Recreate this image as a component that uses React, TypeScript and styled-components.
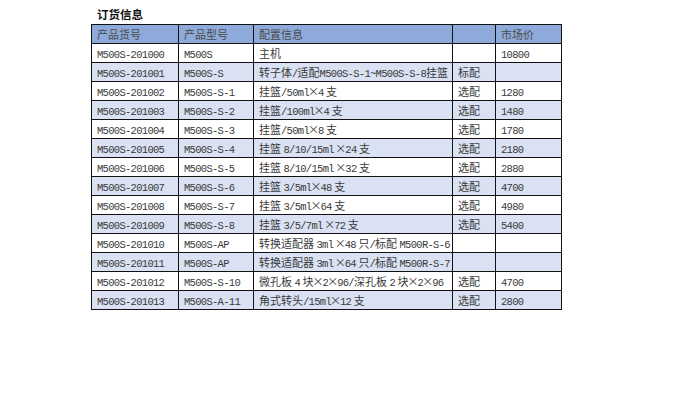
import styled, { createGlobalStyle } from 'styled-components';

const GlobalStyle = createGlobalStyle`
  html, body {
    margin: 0;
    padding: 0;
    background: #ffffff;
  }
  body {
    font-family: "Noto Sans CJK SC", "Liberation Sans", sans-serif;
  }
`;

const St = {
  Page: styled.div`
    padding: 8px 0 0 91px;
  `,
  Title: styled.h3`
    margin: 0 0 3px 6px;
    height: 13px;
    line-height: 13px;
    font-size: 11.5px;
    font-weight: 700;
    color: #111;
  `,
  Table: styled.table`
    border-collapse: collapse;
    table-layout: fixed;
    width: 470px;
    font-size: 11px;
    color: #3a3a3a;
  `,
  Row: styled.tr`
    height: 19px;
  `,
  Cell: styled.td<{ $head?: boolean; $alt?: boolean }>`
    border: 1px solid #111;
    height: 18px;
    padding: 0 5px;
    line-height: 12px;
    vertical-align: middle;
    white-space: nowrap;
    overflow: hidden;
    font-weight: 400;
    text-align: left;
    color: ${(p) => (p.$head ? '#4a4a4a' : '#3a3a3a')};
    background: ${(p) => (p.$head ? '#8eaadb' : p.$alt ? '#d9e1f2' : '#ffffff')};
  `,
  Latin: styled.span`
    font-family: "Liberation Mono", monospace;
    font-size: 10.5px;
    line-height: 10px;
    letter-spacing: -0.7px;
  `,
  Times: styled.span`
    margin: 0 -1px;
  `,
};

const cols = [87, 75, 199, 43, 66];

const head = ['产品货号', '产品型号', '配置信息', '', '市场价'];

const rows: string[][] = [
  ['M500S-201000', 'M500S', '主机', '', '10800'],
  ['M500S-201001', 'M500S-S', '转子体/适配M500S-S-1~M500S-S-8挂篮', '标配', ''],
  ['M500S-201002', 'M500S-S-1', '挂篮/50ml×4 支', '选配', '1280'],
  ['M500S-201003', 'M500S-S-2', '挂篮/100ml×4 支', '选配', '1480'],
  ['M500S-201004', 'M500S-S-3', '挂篮/50ml×8 支', '选配', '1780'],
  ['M500S-201005', 'M500S-S-4', '挂篮 8/10/15ml ×24 支', '选配', '2180'],
  ['M500S-201006', 'M500S-S-5', '挂篮 8/10/15ml ×32 支', '选配', '2880'],
  ['M500S-201007', 'M500S-S-6', '挂篮 3/5ml×48 支', '选配', '4700'],
  ['M500S-201008', 'M500S-S-7', '挂篮 3/5ml×64 支', '选配', '4980'],
  ['M500S-201009', 'M500S-S-8', '挂篮 3/5/7ml ×72 支', '选配', '5400'],
  ['M500S-201010', 'M500S-AP', '转换适配器 3ml ×48 只/标配 M500R-S-6', '', ''],
  ['M500S-201011', 'M500S-AP', '转换适配器 3ml ×64 只/标配 M500R-S-7', '', ''],
  ['M500S-201012', 'M500S-S-10', '微孔板 4 块×2×96/深孔板 2 块×2×96', '选配', '4700'],
  ['M500S-201013', 'M500S-A-11', '角式转头/15ml×12 支', '选配', '2800'],
];

// latin runs get a narrow mono face, × is pulled in a little, CJK stays in the body font
const Text = ({ value }: { value: string }) => (
  <>
    {value.split(/(×|[\x21-\x7e](?:[\x20-\x7e]*[\x21-\x7e])?)/).map((part, i) => {
      if (i % 2 === 0) return part;
      if (part === '×') return <St.Times key={i}>×</St.Times>;
      return <St.Latin key={i}>{part}</St.Latin>;
    })}
  </>
);

const App = () => {
  return (
    <>
      <GlobalStyle />
      <St.Page>
        <St.Title>订货信息</St.Title>
        <St.Table>
          <colgroup>
            {cols.map((w, i) => (
              <col key={i} style={{ width: w }} />
            ))}
          </colgroup>
          <thead>
            <St.Row>
              {head.map((h, i) => (
                <St.Cell as="th" key={i} $head>
                  {h}
                </St.Cell>
              ))}
            </St.Row>
          </thead>
          <tbody>
            {rows.map((r, ri) => (
              <St.Row key={ri}>
                {r.map((c, ci) => (
                  <St.Cell key={ci} $alt={ri % 2 === 1}>
                    <Text value={c} />
                  </St.Cell>
                ))}
              </St.Row>
            ))}
          </tbody>
        </St.Table>
      </St.Page>
    </>
  );
};

export default App;
